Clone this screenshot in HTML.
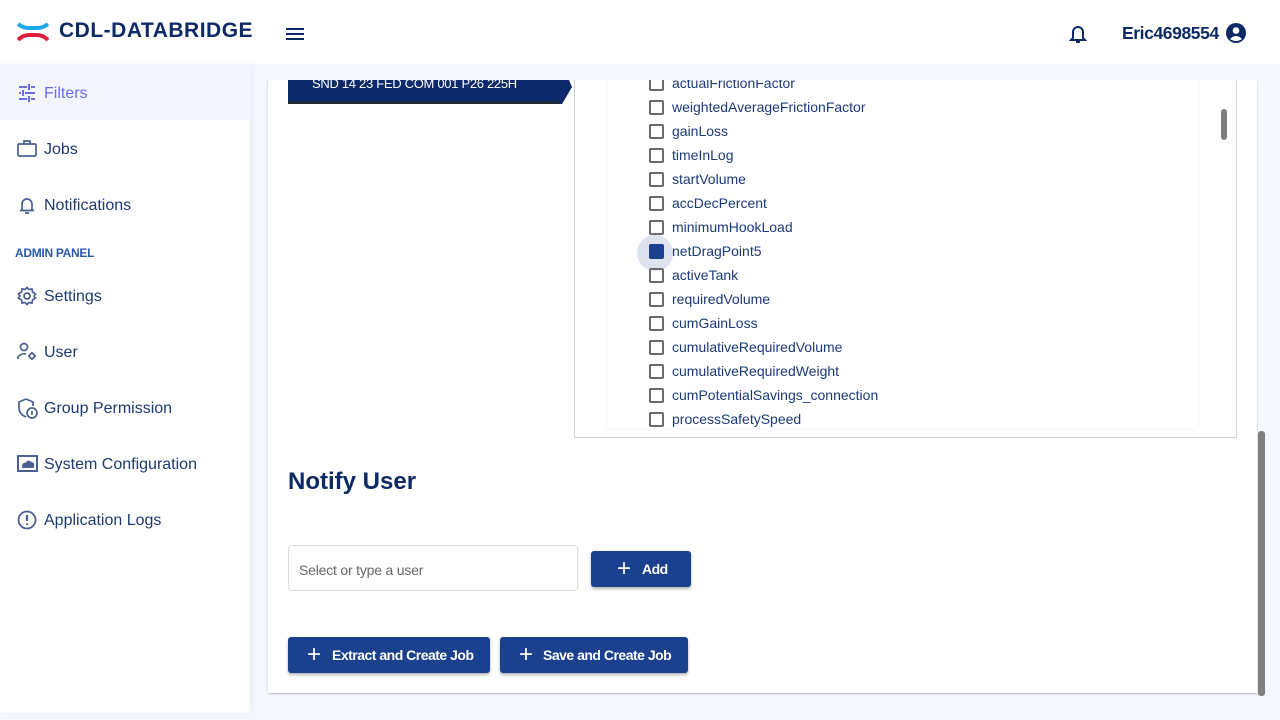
<!DOCTYPE html>
<html><head><style>
*{margin:0;padding:0;box-sizing:border-box}
body{width:1280px;height:720px;overflow:hidden;background:#f5f8fe;font-family:"Liberation Sans",sans-serif;position:relative}
.hdr{position:absolute;left:0;top:0;width:1280px;height:64px;background:#fff}
.logo{position:absolute;left:59px;top:19px;font-size:21px;font-weight:bold;color:#0d2a66;letter-spacing:0.5px}
.side{position:absolute;left:0;top:64px;width:250px;height:649px;background:#fff;box-shadow:2px 0 8px rgba(0,0,0,0.05)}
.nav{position:absolute;left:0;width:250px;height:56px;color:#1e3a6e;font-size:16px}
.nav span{position:absolute;left:44px;top:21px}
.nav svg{position:absolute;left:17px;top:19px}
.clip{position:absolute;left:0;top:80px;width:1280px;height:640px;overflow:hidden}
.clip>div{position:absolute}
.card{left:268px;top:0;width:989px;height:613px;background:#fff;box-shadow:0 1px 2px rgba(0,0,0,0.25)}
.tag{left:288px;top:-16px;width:272px;height:40px;background:#0c2a6b;border-bottom:3px solid #1e2a3a}
.tag span{position:absolute;left:24px;top:12px;color:#fff;font-size:13px;letter-spacing:-0.3px}
.box{left:574px;top:-16px;width:663px;height:374px;border:1px solid #d4d4d4;border-top:none;background:#fff}
.inner{left:608px;top:-16px;width:590px;height:364px;box-shadow:0 0 4px rgba(0,0,0,0.06)}
.row{left:672px;font-size:14px;color:#1b3a78}
.cb{left:649px;width:15px;height:15px;border:2px solid #6b6b6b;border-radius:2px}
.btn{position:absolute;background:#1b418e;color:#fff;font-weight:bold;font-size:14px;letter-spacing:-0.5px;border-radius:3px;box-shadow:0 2px 3px rgba(0,0,0,0.3)}
.btn b{position:absolute;font-size:24px;font-weight:normal;top:4px}
</style></head><body>
<div class="hdr">
<svg style="position:absolute;left:17px;top:21px" width="32" height="22" viewBox="0 0 32 22"><path d="M1 3 Q6 7 12 7 L20 7 Q26 7 31 3" stroke="#1ba8e8" stroke-width="4" fill="none"/><path d="M1 19 Q6 14 12 14 L20 14 Q26 14 31 19" stroke="#e31e3c" stroke-width="4" fill="none"/></svg>
<div class="logo">CDL-DATABRIDGE</div>
<svg style="position:absolute;left:286px;top:28px" width="18" height="13"><rect y="0" width="18" height="2" fill="#0d2a66"/><rect y="5" width="18" height="2" fill="#0d2a66"/><rect y="10" width="18" height="2" fill="#0d2a66"/></svg>
<svg style="position:absolute;left:1069px;top:24px" width="18" height="20" viewBox="0 0 18 20"><path d="M4 14 V8 a5 5 0 0 1 10 0 V14 L16 16 H2 Z" stroke="#0d2a66" stroke-width="2" fill="none"/><rect x="7" y="17" width="4" height="2" fill="#0d2a66"/></svg>
<div style="position:absolute;left:1122px;top:23px;font-size:17.5px;font-weight:bold;color:#0d2a66;letter-spacing:-0.4px">Eric4698554</div>
<svg style="position:absolute;left:1225px;top:22px" width="22" height="22" viewBox="0 0 22 22"><circle cx="11" cy="11" r="10" fill="#0d2a66"/><circle cx="11" cy="8.5" r="3.3" fill="#fff"/><path d="M5 17 Q11 11 17 17 Q11 21 5 17Z" fill="#fff"/></svg>
</div>
<div class="side">
<div class="nav" style="top:0;background:#f3f6fe;color:#6a6af0"><svg width="20" height="20" viewBox="0 0 20 20" stroke="#6a6af0" stroke-width="2"><path d="M2 4H10M14 4H18M12 1V7M2 10H4M8 10H18M6 7V13M2 16H10M14 16H18M12 13V19"/></svg><span>Filters</span></div>
<div class="nav" style="top:56px"><svg width="20" height="20" viewBox="0 0 20 20" fill="none" stroke="#4a5f94" stroke-width="1.7"><rect x="1" y="5" width="18" height="12" rx="1"/><path d="M7 5V2H13V5"/></svg><span>Jobs</span></div>
<div class="nav" style="top:112px"><svg width="20" height="20" viewBox="0 0 20 20" fill="none" stroke="#4a5f94" stroke-width="1.7"><path d="M5 14V9a5 5 0 0 1 10 0V14L16 15.5H4Z"/><path d="M8 18H12"/></svg><span>Notifications</span></div>
<div style="position:absolute;left:15px;top:182px;font-size:12px;font-weight:bold;color:#2d5aa8;letter-spacing:-0.3px">ADMIN PANEL</div>
<div class="nav" style="top:203px"><svg width="20" height="20" viewBox="0 0 20 20" fill="none" stroke="#4a5f94" stroke-width="1.7"><circle cx="10" cy="10" r="3"/><path d="M10 1.5L12 3.5L15 3L15.5 6L18.5 8L17 10L18.5 12L15.5 14L15 17L12 16.5L10 18.5L8 16.5L5 17L4.5 14L1.5 12L3 10L1.5 8L4.5 6L5 3L8 3.5Z"/></svg><span>Settings</span></div>
<div class="nav" style="top:259px"><svg width="22" height="20" viewBox="0 0 22 20" fill="none" stroke="#4a5f94" stroke-width="1.7"><circle cx="7" cy="5" r="3.5"/><path d="M1 17V15Q4 11 9 12"/><circle cx="15" cy="14" r="2.5"/><path d="M15 10V11M15 17V18M11 14H12M18 14H19"/></svg><span>User</span></div>
<div class="nav" style="top:315px"><svg width="22" height="22" viewBox="0 0 22 22" fill="none" stroke="#4a5f94" stroke-width="1.7"><path d="M9 1L2 4V10Q2 16 9 19"/><path d="M9 1L16 4V8"/><circle cx="15" cy="15" r="5"/><path d="M15 13V17"/></svg><span>Group Permission</span></div>
<div class="nav" style="top:371px"><svg width="22" height="20" viewBox="0 0 22 20" fill="none" stroke="#4a5f94" stroke-width="2"><rect x="1" y="2" width="19" height="15"/><path d="M6 13Q6 9 9 10Q11 6 14 9Q17 9 16 13Z" fill="#4a5f94"/></svg><span>System Configuration</span></div>
<div class="nav" style="top:427px"><svg width="20" height="20" viewBox="0 0 20 20" fill="none" stroke="#4a5f94" stroke-width="1.8"><circle cx="10" cy="10" r="8.5"/><path d="M10 5V11M10 13.5V15" stroke-width="2.2"/></svg><span>Application Logs</span></div>
</div>
<div class="clip">
<div class="card"></div>
<div class="tag"><span>SND 14 23 FED COM 001 P26 225H</span></div>
<svg style="position:absolute;left:559px;top:-16px" width="14" height="40"><path d="M0 0H3L13 23L3 40H0Z" fill="#0c2a6b"/></svg>
<div class="box"></div>
<div class="inner"></div>
<div style="left:1221px;top:29px;width:6px;height:31px;border-radius:3px;background:#7f7f7f"></div>
<div style="left:637px;top:155px;width:36px;height:36px;border-radius:50%;background:#dde2ee"></div>
<div id="rows" style="left:0;top:0"></div>
<div style="left:288px;top:388px;font-size:24px;font-weight:bold;color:#0d2a66">Notify User</div>
<div style="left:288px;top:465px;width:290px;height:46px;border:1px solid #dcdcdc;border-radius:4px;background:#fff"><span style="position:absolute;left:10px;top:16px;font-size:14px;color:#666;letter-spacing:-0.2px">Select or type a user</span></div>
<div class="btn" style="left:591px;top:471px;width:100px;height:36px"><b style="left:26px">+</b><span style="position:absolute;left:51px;top:10px">Add</span></div>
<div class="btn" style="left:288px;top:557px;width:202px;height:36px"><b style="left:19px">+</b><span style="position:absolute;left:44px;top:10px">Extract and Create Job</span></div>
<div class="btn" style="left:500px;top:557px;width:188px;height:36px"><b style="left:19px">+</b><span style="position:absolute;left:43px;top:10px">Save and Create Job</span></div>
<div style="left:1258px;top:351px;width:7px;height:265px;border-radius:3px;background:#7f7f7f"></div>
</div>
<script>
var n=["actualFrictionFactor","weightedAverageFrictionFactor","gainLoss","timeInLog","startVolume","accDecPercent","minimumHookLoad","netDragPoint5","activeTank","requiredVolume","cumGainLoss","cumulativeRequiredVolume","cumulativeRequiredWeight","cumPotentialSavings_connection","processSafetySpeed"];
var h="";n.forEach(function(t,i){var y=3+24*i;
var cb=i==7?'<div class="cb" style="position:absolute;top:'+(y-7)+'px;background:#1b418e;border-color:#1b418e"></div>':'<div class="cb" style="position:absolute;top:'+(y-7)+'px"></div>';
h+=cb+'<div class="row" style="position:absolute;top:'+(y-8)+'px">'+t+'</div>';});
document.getElementById("rows").innerHTML=h;
</script>
</body></html>
